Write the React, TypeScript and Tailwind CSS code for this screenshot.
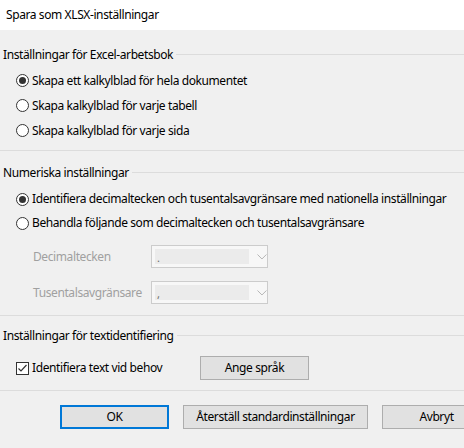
import React from "react";

function Radio({ checked, label }: { checked?: boolean; label: string }) {
  return (
    <div className="flex h-[25px] items-center pl-[16px]">
      <div className="flex h-[13px] w-[13px] shrink-0 items-center justify-center rounded-full border border-[#333333] bg-white">
        {checked && <div className="h-[7px] w-[7px] rounded-full bg-[#333333]" />}
      </div>
      <span className="ml-[3px] whitespace-nowrap">{label}</span>
    </div>
  );
}

function GroupHeader({ label }: { label: string }) {
  return (
    <div className="flex h-[16px] items-center pl-[3px]">
      <span className="whitespace-nowrap">{label}</span>
      <div className="ml-[3px] mt-[-2px] h-px flex-1 bg-[#dcdcdc]" />
    </div>
  );
}

function Combo({ label, value }: { label: string; value: string }) {
  return (
    <div className="flex h-[23px] items-center">
      <span className="w-[151px] shrink-0 whitespace-nowrap pl-[33px] text-[#a0a0a0]">{label}</span>
      <div className="flex h-[23px] w-[117px] items-center border border-[#cccccc] bg-[#f7f7f7] pl-[3px]">
        <div className="flex h-[15px] w-[95px] items-end bg-[#ebebeb] pl-[2px] text-[11px] leading-[13px] text-[#6d6d6d]">
          {value}
        </div>
        <svg width="10" height="6" viewBox="0 0 10 6" className="ml-[8px]">
          <path d="M0.5 0.5 L5 5 L9.5 0.5" fill="none" stroke="#b5b5b5" strokeWidth="1" />
        </svg>
      </div>
    </div>
  );
}

function Button({ label, focused, w }: { label: string; focused?: boolean; w: string }) {
  return (
    <div
      className={
        "flex h-[24px] shrink-0 items-center justify-center bg-[#e1e1e1] " +
        w +
        (focused ? " border-2 border-[#0078d7]" : " border border-[#adadad]")
      }
    >
      <span className="whitespace-nowrap">{label}</span>
    </div>
  );
}

export default function App() {
  return (
    <div
      className="flex h-[448px] w-[464px] flex-col overflow-hidden bg-[#f0f0f0] text-[12px] leading-[16px] tracking-[-0.4px] text-black"
      style={{ fontFamily: '"Noto Sans", "Open Sans", sans-serif' }}
    >
      <div className="flex h-[30px] shrink-0 items-center bg-white pl-[6px]">
        <span>Spara som XLSX-inställningar</span>
      </div>

      <div className="mt-[17px]">
        <GroupHeader label="Inställningar för Excel-arbetsbok" />
      </div>
      <div className="mt-[5px]">
        <Radio checked label="Skapa ett kalkylblad för hela dokumentet" />
        <Radio label="Skapa kalkylblad för varje tabell" />
        <Radio label="Skapa kalkylblad för varje sida" />
      </div>
      <div className="mt-[7px] h-px bg-[#dcdcdc]" />

      <div className="mt-[14px]">
        <GroupHeader label="Numeriska inställningar" />
      </div>
      <div className="mt-[6px]">
        <div className="[&>div]:h-[24px]">
          <Radio checked label="Identifiera decimaltecken och tusentalsavgränsare med nationella inställningar" />
          <Radio label="Behandla följande som decimaltecken och tusentalsavgränsare" />
        </div>
      </div>
      <div className="mt-[10px] flex flex-col gap-[13px]">
        <Combo label="Decimaltecken" value="." />
        <Combo label="Tusentalsavgränsare" value="," />
      </div>
      <div className="mt-[11px] h-px bg-[#dcdcdc]" />

      <div className="mt-[12px]">
        <GroupHeader label="Inställningar för textidentifiering" />
      </div>
      <div className="mt-[12px] flex h-[24px] items-center pl-[16px]">
        <div className="flex h-[13px] w-[13px] shrink-0 items-center justify-center border border-[#333333] bg-white">
          <svg width="11" height="11" viewBox="0 0 11 11">
            <path d="M1.5 5.5 L4 8 L9.5 2" fill="none" stroke="#333333" strokeWidth="1.2" />
          </svg>
        </div>
        <span className="ml-[3px] w-[168px] shrink-0 whitespace-nowrap">Identifiera text vid behov</span>
        <Button label="Ange språk" w="w-[109px]" />
      </div>
      <div className="mt-[10px] h-px bg-[#dcdcdc]" />

      <div className="mt-[14px] flex gap-[14px] pl-[60px]">
        <Button label="OK" focused w="w-[109px]" />
        <Button label="Återställ standardinställningar" w="w-[185px]" />
        <Button label="Avbryt" w="w-[109px]" />
      </div>
    </div>
  );
}
